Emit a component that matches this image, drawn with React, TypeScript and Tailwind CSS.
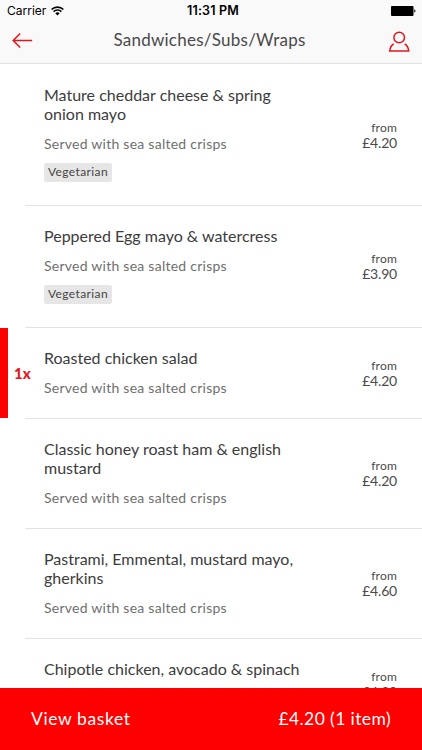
import React from 'react';

type MenuItem = {
  name: string;
  description: string;
  price: string;
  vegetarian?: boolean;
  quantity?: number;
};

const items: MenuItem[] = [
  { name: 'Mature cheddar cheese & spring onion mayo', description: 'Served with sea salted crisps', price: '£4.20', vegetarian: true },
  { name: 'Peppered Egg mayo & watercress', description: 'Served with sea salted crisps', price: '£3.90', vegetarian: true },
  { name: 'Roasted chicken salad', description: 'Served with sea salted crisps', price: '£4.20', quantity: 1 },
  { name: 'Classic honey roast ham & english mustard', description: 'Served with sea salted crisps', price: '£4.20' },
  { name: 'Pastrami, Emmental, mustard mayo, gherkins', description: 'Served with sea salted crisps', price: '£4.60' },
  { name: 'Chipotle chicken, avocado & spinach', description: 'Served with sea salted crisps', price: '£4.20' },
];

const StatusBar = () => (
  <div className="grid h-[22px] grid-cols-3 items-center pr-[6px] pl-[7px] font-['Inter','Liberation_Sans',sans-serif] text-[12px] text-black">
    <div className="flex items-center gap-[5px]">
      <span>Carrier</span>
      <svg width="13" height="10" viewBox="0 0 13 10" fill="none" stroke="#000" strokeWidth="1.6">
        <path d="M.6 3.5a8.4 8.4 0 0 1 11.8 0" />
        <path d="M2.6 5.6a5.5 5.5 0 0 1 7.8 0" />
        <path d="M6.5 9.6 4.3 7.3a3.2 3.2 0 0 1 4.4 0z" fill="#000" stroke="none" />
      </svg>
    </div>
    <span className="pl-[3px] text-center text-[12.5px] font-semibold tracking-[0.2px]">11:31 PM</span>
    <svg className="justify-self-end" width="25" height="10" viewBox="0 0 25 10" fill="#000">
      <rect width="22.5" height="10" rx="1" />
      <path d="M23.3 3.3c1.6.4 1.6 3 0 3.4z" />
    </svg>
  </div>
);

const Header = () => (
  <header className="h-16 shrink-0 border-b border-[#e2e2e2] bg-[#f9f9f9]">
    <StatusBar />
    <div className="flex h-[36px] items-center justify-between px-[12px]">
      <button aria-label="Back">
        <svg width="21" height="16" viewBox="0 0 21 16" fill="none" stroke="#e5151b" strokeWidth="1.5">
          <path d="M20.2 8.5H1.2M8.200 1.500 1.200 8.500l7 7" />
        </svg>
      </button>
      <h1 className="pr-[2px] text-[17px] leading-5 tracking-[0.25px] text-[#4a4a4a]">Sandwiches/Subs/Wraps</h1>
      <button aria-label="Account">
        <svg className="mt-[3px]" width="22" height="21" viewBox="0 0 22 21" fill="none" stroke="#e5151b" strokeWidth="1.5">
          <circle cx="11.2" cy="6.5" r="5.3" />
          <path d="M5.700 13c-2.200 1.300-3.700 3.800-4 7h19c-.3-3.200-1.800-5.700-4-7" />
        </svg>
      </button>
    </div>
  </header>
);

const MenuRow = ({ item }: { item: MenuItem }) => (
  <li className="flex">
    <div className="flex w-[25px] shrink-0 items-stretch">
      {item.quantity && (
        <>
          <div className="mb-px w-2 shrink-0 bg-[#fe0000]" />
          <span className="self-center pl-[6px] text-[15px] font-black text-[#e5151b]">{item.quantity}x</span>
        </>
      )}
    </div>
    <div className="flex flex-1 items-center justify-between border-b border-[#e2e2e2] pr-[25px] pl-[19px]">
      <div className="w-[262px] pt-[19.5px] pb-[19.5px]">
        <h2 className="text-[16px] leading-[19px] text-[#3c3c3c]">{item.name}</h2>
        <p className="mt-[11.5px] text-[14px] leading-[20.5px] tracking-[0.25px] text-[#6f6f6f]">{item.description}</p>
        {item.vegetarian && (
          <span className="mt-2 mb-1 flex h-[19px] w-[68px] items-center justify-center rounded-[2px] bg-[#e6e6e6] text-[12px] tracking-[0.4px] text-[#444]">
            Vegetarian
          </span>
        )}
      </div>
      <div className="text-right text-[#4a4a4a]">
        <div className="text-[12px] leading-[15px] tracking-[0.2px]">from</div>
        <div className="text-[14px] leading-4 tracking-[-0.2px]">{item.price}</div>
      </div>
    </div>
  </li>
);

const App = () => {
  return (
    <div className="flex h-[750px] w-[422px] flex-col overflow-hidden bg-white font-['Lato','Liberation_Sans',sans-serif]">
      <Header />
      <ul className="min-h-0 flex-1 overflow-hidden pt-px">
        {items.map((item) => (
          <MenuRow key={item.name} item={item} />
        ))}
      </ul>
      <footer className="flex h-[62px] shrink-0 items-center justify-between bg-[#fe0000] px-[31px] text-[17.5px] text-white">
        <span className="tracking-[0.6px]">View basket</span>
        <span className="tracking-[0.4px]">£4.20 (1 item)</span>
      </footer>
    </div>
  );
};

export default App;
